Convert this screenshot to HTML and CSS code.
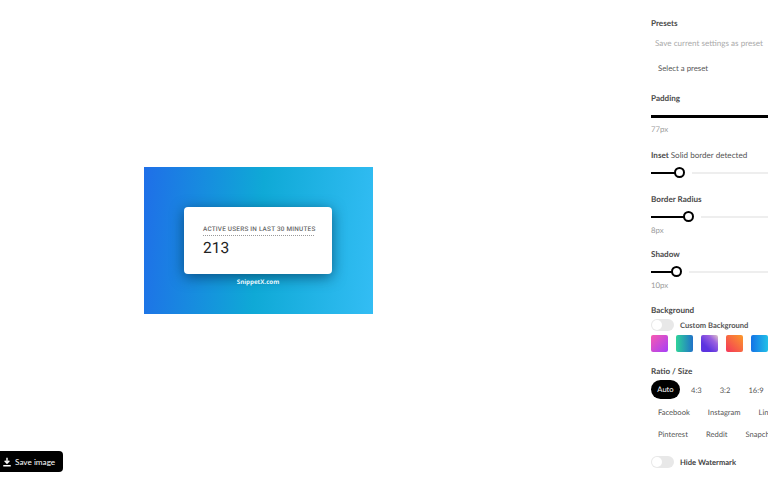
FILE: index.html
```html
<!DOCTYPE html>
<html lang="en">
<head>
<meta charset="utf-8">
<title>SnippetX</title>
<link rel="stylesheet" href="styles.css">
</head>
<body>
<div class="app">
  <main class="stage">
    <div class="canvas">
      <div class="card">
        <div class="card-title">ACTIVE USERS IN LAST 30 MINUTES</div>
        <div class="card-value">213</div>
      </div>
      <div class="watermark">SnippetX.com</div>
    </div>
  </main>
  <aside class="panel">
    <section class="group presets">
      <h3 class="label">Presets</h3>
      <div class="field placeholder">Save current settings as preset</div>
      <div class="field select">Select a preset</div>
    </section>
    <section class="group padding">
      <h3 class="label">Padding</h3>
      <div class="slider"><span class="fill full"></span></div>
      <div class="value">77px</div>
    </section>
    <section class="group inset">
      <h3 class="label">Inset <span class="note">Solid border detected</span></h3>
      <div class="slider"><span class="fill" style="width:28px"></span><span class="thumb" style="left:23px"></span><span class="rest" style="left:41px"></span></div>
    </section>
    <section class="group radius">
      <h3 class="label">Border Radius</h3>
      <div class="slider"><span class="fill" style="width:37px"></span><span class="thumb" style="left:32px"></span><span class="rest" style="left:50px"></span></div>
      <div class="value">8px</div>
    </section>
    <section class="group shadow">
      <h3 class="label">Shadow</h3>
      <div class="slider"><span class="fill" style="width:25px"></span><span class="thumb" style="left:20px"></span><span class="rest" style="left:38px"></span></div>
      <div class="value">10px</div>
    </section>
    <section class="group background">
      <h3 class="label">Background</h3>
      <div class="toggle-row"><span class="toggle"></span><span class="toggle-text">Custom Background</span></div>
      <div class="swatches">
        <span class="swatch s1"></span>
        <span class="swatch s2"></span>
        <span class="swatch s3"></span>
        <span class="swatch s4"></span>
        <span class="swatch s5"></span>
      </div>
    </section>
    <section class="group ratio">
      <h3 class="label">Ratio / Size</h3>
      <div class="pills first">
        <span class="pill active">Auto</span>
        <span class="pill w-43">4:3</span>
        <span class="pill w-32">3:2</span>
        <span class="pill w-169">16:9</span>
      </div>
      <div class="pills second">
        <span class="pill">Facebook</span>
        <span class="pill">Instagram</span>
        <span class="pill">LinkedIn</span>
      </div>
      <div class="pills third">
        <span class="pill">Pinterest</span>
        <span class="pill">Reddit</span>
        <span class="pill">Snapchat</span>
      </div>
    </section>
    <div class="toggle-row hide"><span class="toggle"></span><span class="toggle-text">Hide Watermark</span></div>
  </aside>
</div>
<button class="save" type="button">
  <svg viewBox="0 0 12 12" width="10" height="10" aria-hidden="true"><path d="M6 1v6M3.2 4.6 6 7.4l2.8-2.8M1.5 10.5h9" fill="none" stroke="#fff" stroke-width="1.7"/></svg>
  Save image
</button>
</body>
</html>
```
FILE: styles.css
```css
* { box-sizing: border-box; }
html, body { margin: 0; width: 768px; height: 480px; overflow: hidden; background: #fff; }
body { font-family: Lato, "Open Sans", sans-serif; color: #333; position: relative; text-rendering: geometricPrecision; }
.app { display: grid; grid-template-columns: 516px 252px; width: 768px; height: 480px; overflow: hidden; }
.stage { display: flex; align-items: center; justify-content: center; height: 480px; padding-top: 1px; }
.canvas {
  width: 229px; height: 147px; display: flex; flex-direction: column; align-items: center;
  padding-top: 40px;
  background: linear-gradient(95deg, #1f6fe8 0%, #0fa9d6 50%, #33bdf4 100%);
}
.card {
  width: 148px; height: 67px; background: #fff; border-radius: 4px; padding: 18px 19px 0;
  box-shadow: 0 3px 14px rgba(0, 45, 80, .65);
}
.card-title {
  font-family: Roboto, sans-serif; font-size: 6.4px; font-weight: 500; letter-spacing: .22px; line-height: 9px; color: #666;
  white-space: nowrap; border-bottom: 1px dotted #999; padding-bottom: 1px; width: 111px;
}
.card-value { font-family: Roboto, sans-serif; font-size: 15.5px; line-height: 20px; color: #222; margin-top: 2px; }
.watermark { font-family: "Open Sans", sans-serif; font-size: 6.2px; font-weight: 700; color: #e8f8ff; line-height: 9px; margin-top: 3px; }

.panel { padding: 17px 0 0 135px; width: 252px; }
.group { width: 117px; }
.label { margin: 0; font-size: 8.1px; font-weight: 700; line-height: 12px; color: #4a4a4a; white-space: nowrap; }
.note { font-weight: 400; color: #555; }
.field { height: 17px; white-space: nowrap; }
.placeholder { margin-top: 6px; padding-left: 4px; color: #aaa; font-size: 8.1px; line-height: 17px; }
.select { margin-top: 8px; padding: 0 7px; color: #555; font-size: 7.8px; line-height: 17px; }
.slider { position: relative; height: 12px; margin-top: 6px; width: 117px; }
.fill { position: absolute; left: 0; top: 5px; height: 2px; background: #000; }
.fill.full { width: 117px; height: 3px; }
.rest { position: absolute; top: 5px; right: 0; height: 2px; background: #eee; }
.thumb { position: absolute; top: 0; width: 11px; height: 11px; border: 2px solid #000; border-radius: 50%; background: #fff; z-index: 1; }
.value { font-size: 7.8px; line-height: 10px; color: #999; margin-top: 2px; }

.padding { margin-top: 15px; }
.inset { margin-top: 15px; }
.radius { margin-top: 14px; }
.shadow { margin-top: 13px; }
.background { margin-top: 14px; }
.ratio { margin-top: 13px; }
.ratio .pills.first { margin-top: 3px; }

.toggle-row { display: flex; align-items: center; gap: 6px; height: 12px; margin-top: 3px; }
.toggle { position: relative; width: 23px; height: 12px; border-radius: 6px; background: #e8e8e8; flex: none; }
.toggle::after { content: ""; position: absolute; left: 1px; top: 1px; width: 10px; height: 10px; border-radius: 50%; background: #fff; }
.toggle-text { font-size: 7.6px; font-weight: 700; color: #555; white-space: nowrap; }
.swatches { display: flex; gap: 8px; margin-top: 4px; }
.swatch { width: 17px; height: 17px; border-radius: 2px; flex: none; }
.s1 { background: linear-gradient(135deg, #f85ab0, #a53ff8); }
.s2 { background: linear-gradient(90deg, #2fd39a, #2172c8); }
.s3 { background: linear-gradient(45deg, #5c33e0 30%, #9a60e0 70%, #e0c8c8); }
.s4 { background: linear-gradient(45deg, #f4365a, #fb9a2a); }
.s5 { background: linear-gradient(90deg, #1473e6, #22c0e8); }

.pills { display: flex; align-items: center; white-space: nowrap; width: 140px; }
.first { height: 19px; }
.second { margin-top: 3px; height: 19px; padding-left: 7px; gap: 18px; }
.third { margin-top: 3px; height: 19px; padding-left: 7px; gap: 18px; }
.pill { font-size: 7.6px; color: #555; }
.active { width: 29px; height: 19px; border-radius: 10px; background: #000; color: #fff; text-align: center; line-height: 19px; }
.w-43 { margin-left: 11px; }
.w-32 { margin-left: 18px; }
.w-169 { margin-left: 18px; }
.hide { margin-top: 13px; }
.hide .toggle-text { color: #444; }

.save {
  position: absolute; left: 0; top: 451px; width: 63px; height: 21px; border: 0; padding: 0 0 0 2px;
  display: flex; align-items: center; gap: 3px; background: #000; color: #fff; border-radius: 0 4px 4px 0;
  font: 400 8.2px Lato, sans-serif; white-space: nowrap;
}
```
